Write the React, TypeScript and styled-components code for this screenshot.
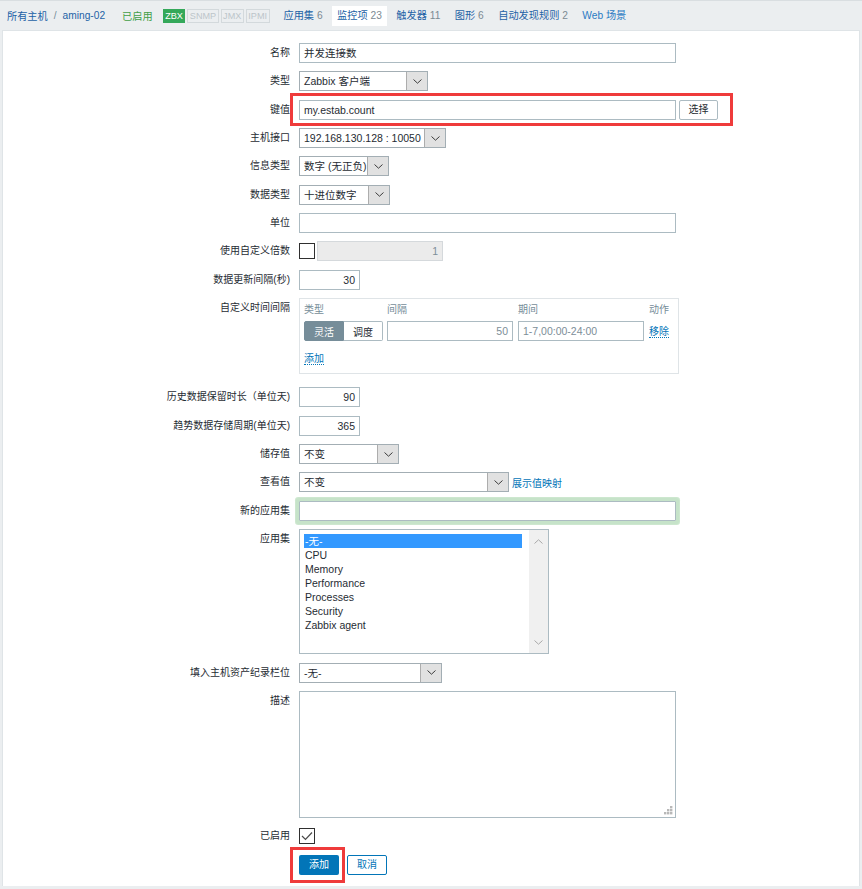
import React from "react";
import styled, { createGlobalStyle } from "styled-components";

const GlobalStyle = createGlobalStyle`
  html, body {
    margin: 0;
    padding: 0;
    background: #ebeef0;
  }
  body {
    font-family: "Liberation Sans", "Noto Sans CJK SC", sans-serif;
    font-size: 10.5px;
    color: #1f2c33;
  }
  * {
    box-sizing: border-box;
  }
`;

const Page = styled.div`
  width: 862px;
  min-height: 889px;
  background: #ebeef0;
  border-top: 1px solid #d9dee1;
`;

/* ---------- host navigation ---------- */

const HostNav = styled.div`
  display: flex;
  align-items: center;
  height: 29px;
  padding-left: 7px;
  font-size: 10.2px;
  white-space: nowrap;
`;

const Breadcrumbs = styled.div`
  display: flex;
  align-items: center;
  gap: 6px;
  color: #1d62a6;
`;

const Slash = styled.span`
  color: #768d99;
`;

const Status = styled.span`
  margin-left: 17px;
  color: #429e47;
`;

const Badges = styled.div`
  display: flex;
  gap: 2px;
  margin-left: 10px;
`;

const Badge = styled.span<{ $on?: boolean }>`
  height: 14px;
  line-height: 12px;
  padding: 0 1.5px;
  font-size: 9.1px;
  border: 1px solid ${(p) => (p.$on ? "#34a85a" : "#d3d9dc")};
  background: ${(p) => (p.$on ? "#34a85a" : "#ebeef0")};
  color: ${(p) => (p.$on ? "#fff" : "#bcc5ca")};
`;

const Tabs = styled.div`
  display: flex;
  gap: 4.5px;
  margin-left: 9px;
`;

const Tab = styled.span<{ $active?: boolean; $light?: boolean }>`
  height: 20px;
  line-height: 20px;
  padding: 0 5px;
  background: ${(p) => (p.$active ? "#fff" : "transparent")};
  color: ${(p) => (p.$light ? "#2a7ac3" : "#1d62a6")};
`;

const Count = styled.span`
  color: #7b8a93;
`;

/* ---------- form ---------- */

const Panel = styled.div`
  margin: 0 2px;
  background: #fff;
  border: 1px solid #dfe4e7;
  border-bottom: none;
  padding: 12px 0 11px;
`;

const FormList = styled.div`
  display: flex;
  flex-direction: column;
  gap: 8.35px;
`;

const Row = styled.div`
  display: grid;
  grid-template-columns: 287px auto;
  column-gap: 9px;
  align-items: start;
`;

const Label = styled.div`
  text-align: right;
  line-height: 20px;
  font-size: 10px;
  white-space: nowrap;
`;

const Field = styled.div<{ $gap?: number }>`
  position: relative;
  justify-self: start;
  display: flex;
  align-items: center;
  gap: ${(p) => p.$gap ?? 3}px;
  min-height: 20px;
`;

const Marked = styled.span<{ $t: number; $r: number; $b: number; $l: number }>`
  position: relative;
  display: inline-flex;
  align-items: center;
  gap: 3px;
  &::after {
    content: "";
    position: absolute;
    top: ${(p) => -p.$t}px;
    right: ${(p) => -p.$r}px;
    bottom: ${(p) => -p.$b}px;
    left: ${(p) => -p.$l}px;
    border: 3.5px solid #ef3b3b;
    pointer-events: none;
  }
`;

const TextBox = styled.div<{ $w: number; $right?: boolean; $muted?: boolean; $disabled?: boolean; $glow?: boolean }>`
  width: ${(p) => p.$w}px;
  height: 20px;
  line-height: 18px;
  padding: 0 4px;
  border: 1px solid ${(p) => (p.$disabled ? "#d5d9dc" : "#acbbc2")};
  background: ${(p) => (p.$disabled ? "#ebebeb" : "#fff")};
  color: ${(p) => (p.$muted || p.$disabled ? "#7d8e98" : "#1f2c33")};
  text-align: ${(p) => (p.$right ? "right" : "left")};
  white-space: nowrap;
  overflow: hidden;
  box-shadow: ${(p) => (p.$glow ? "0 0 0 3px #c6e3c9, 0 0 0 4px #cde7cf" : "none")};
  border-radius: ${(p) => (p.$glow ? "1px" : "0")};
`;

const SelectBox = styled.div<{ $w: number }>`
  display: flex;
  width: ${(p) => p.$w}px;
  height: 20px;
  border: 1px solid #a3aeb4;
  background: #fff;
`;

const SelectText = styled.span`
  flex: 1;
  padding: 0 4px;
  line-height: 19px;
  white-space: nowrap;
  overflow: hidden;
`;

const SelectArrow = styled.span`
  width: 21px;
  display: flex;
  align-items: center;
  justify-content: center;
  background: #e1e1e1;
  border-left: 1px solid #adadad;
`;

const Chevron = ({ up, color = "#3c3c3c" }: { up?: boolean; color?: string }) => (
  <svg width="9" height="5" viewBox="0 0 9 5">
    <path
      d={up ? "M0.5 4.5 L4.5 0.8 L8.5 4.5" : "M0.5 0.5 L4.5 4.2 L8.5 0.5"}
      fill="none"
      stroke={color}
      strokeWidth="1"
    />
  </svg>
);

const Select = ({ w, value }: { w: number; value: string }) => (
  <SelectBox $w={w}>
    <SelectText>{value}</SelectText>
    <SelectArrow>
      <Chevron />
    </SelectArrow>
  </SelectBox>
);

const PlainButton = styled.span`
  width: 39px;
  height: 20px;
  line-height: 18px;
  text-align: center;
  border: 1px solid #acbbc2;
  border-radius: 2px;
  background: #fff;
  font-size: 10px;
`;

const Checkbox = styled.span`
  width: 16px;
  height: 16px;
  border: 1.5px solid #2f2f2f;
  background: #fff;
  display: flex;
  align-items: center;
  justify-content: center;
`;

const Link = styled.span`
  color: #0275b8;
  line-height: 13px;
  font-size: 10px;
  border-bottom: 1px dotted #0275b8;
`;

const PlainLink = styled.span`
  color: #0275b8;
  font-size: 10px;
`;

/* ---------- custom intervals ---------- */

const IntervalBox = styled.div`
  width: 380px;
  height: 76px;
  margin-bottom: 5px;
  padding: 4px 0 0 4px;
  border: 1px solid #dfe4e7;
`;

const IntervalGrid = styled.div`
  display: grid;
  grid-template-columns: 83px 131px 131px auto;
  row-gap: 4px;
  align-items: center;
`;

const ColHead = styled.span`
  color: #768d99;
  line-height: 14px;
  font-size: 10px;
`;

const Toggle = styled.div`
  display: flex;
  width: 79px;
  height: 20px;
  font-size: 10px;
`;

const ToggleOption = styled.span<{ $active?: boolean }>`
  flex: 1;
  display: flex;
  align-items: center;
  justify-content: center;
  border: 1px solid ${(p) => (p.$active ? "#768d99" : "#acbbc2")};
  background: ${(p) => (p.$active ? "#768d99" : "#fff")};
  color: ${(p) => (p.$active ? "#fff" : "#1f2c33")};
  &:first-child {
    border-radius: 2px 0 0 2px;
  }
  &:last-child {
    border-radius: 0 2px 2px 0;
    border-left: none;
  }
`;

const AddRow = styled.div`
  margin-top: 10px;
  line-height: 14px;
`;

/* ---------- list box ---------- */

const ListBox = styled.div`
  display: flex;
  width: 250px;
  height: 125px;
  border: 1px solid #acbbc2;
`;

const ListItems = styled.div`
  flex: 1;
  padding: 4px 7px 0 4px;
`;

const ListItem = styled.div<{ $selected?: boolean }>`
  height: 14px;
  line-height: 14px;
  padding: 0 1px;
  background: ${(p) => (p.$selected ? "#3399ff" : "transparent")};
  color: ${(p) => (p.$selected ? "#fff" : "#1f2c33")};
`;

const ScrollTrack = styled.div`
  width: 19px;
  background: #f0f0f0;
  display: flex;
  flex-direction: column;
  justify-content: space-between;
  align-items: center;
  padding: 9px 0 8px;
`;

const TextArea = styled.div`
  width: 377px;
  height: 127px;
  border: 1px solid #acbbc2;
  display: flex;
  align-items: flex-end;
  justify-content: flex-end;
  padding: 0 2px 2px 0;
`;

const Grip = () => (
  <svg width="9" height="9" viewBox="0 0 9 9">
    {[
      [6, 0],
      [3, 3],
      [6, 3],
      [0, 6],
      [3, 6],
      [6, 6],
    ].map(([x, y]) => (
      <rect key={`${x}-${y}`} x={x} y={y} width="2.4" height="2.4" fill="#b8b8b8" />
    ))}
  </svg>
);

const PrimaryButton = styled.span`
  width: 40px;
  height: 20px;
  line-height: 20px;
  text-align: center;
  border-radius: 2px;
  background: #0275b8;
  color: #fff;
  font-size: 10px;
`;

const OutlineButton = styled.span`
  width: 40px;
  height: 20px;
  line-height: 18px;
  text-align: center;
  border: 1px solid #0275b8;
  border-radius: 2px;
  background: #fff;
  color: #0275b8;
  font-size: 10px;
`;

const ButtonRow = styled.div`
  display: flex;
  gap: 8px;
  margin-left: 296px;
`;

const applications = ["CPU", "Memory", "Performance", "Processes", "Security", "Zabbix agent"];

const App = () => {
  return (
    <Page>
      <GlobalStyle />
      <HostNav>
        <Breadcrumbs>
          <span>所有主机</span>
          <Slash>/</Slash>
          <span>aming-02</span>
        </Breadcrumbs>
        <Status>已启用</Status>
        <Badges>
          <Badge $on>ZBX</Badge>
          <Badge>SNMP</Badge>
          <Badge>JMX</Badge>
          <Badge>IPMI</Badge>
        </Badges>
        <Tabs>
          <Tab>
            应用集 <Count>6</Count>
          </Tab>
          <Tab $active>
            监控项 <Count>23</Count>
          </Tab>
          <Tab>
            触发器 <Count>11</Count>
          </Tab>
          <Tab>
            图形 <Count>6</Count>
          </Tab>
          <Tab>
            自动发现规则 <Count>2</Count>
          </Tab>
          <Tab $light>Web 场景</Tab>
        </Tabs>
      </HostNav>

      <Panel>
        <FormList>
          <Row>
            <Label>名称</Label>
            <Field>
              <TextBox $w={377}>并发连接数</TextBox>
            </Field>
          </Row>
          <Row>
            <Label>类型</Label>
            <Field>
              <Select w={129} value="Zabbix 客户端" />
            </Field>
          </Row>
          <Row>
            <Label>键值</Label>
            <Field>
              <Marked $t={7} $r={15} $b={6} $l={9}>
                <TextBox $w={377}>my.estab.count</TextBox>
                <PlainButton>选择</PlainButton>
              </Marked>
            </Field>
          </Row>
          <Row>
            <Label>主机接口</Label>
            <Field>
              <Select w={147} value="192.168.130.128 : 10050" />
            </Field>
          </Row>
          <Row>
            <Label>信息类型</Label>
            <Field>
              <Select w={90} value="数字 (无正负)" />
            </Field>
          </Row>
          <Row>
            <Label>数据类型</Label>
            <Field>
              <Select w={91} value="十进位数字" />
            </Field>
          </Row>
          <Row>
            <Label>单位</Label>
            <Field>
              <TextBox $w={377} />
            </Field>
          </Row>
          <Row>
            <Label>使用自定义倍数</Label>
            <Field $gap={2}>
              <Checkbox />
              <TextBox $w={126} $right $disabled>
                1
              </TextBox>
            </Field>
          </Row>
          <Row>
            <Label>数据更新间隔(秒)</Label>
            <Field>
              <TextBox $w={61} $right>
                30
              </TextBox>
            </Field>
          </Row>
          <Row>
            <Label>自定义时间间隔</Label>
            <Field>
              <IntervalBox>
                <IntervalGrid>
                  <ColHead>类型</ColHead>
                  <ColHead>间隔</ColHead>
                  <ColHead>期间</ColHead>
                  <ColHead>动作</ColHead>
                  <Toggle>
                    <ToggleOption $active>灵活</ToggleOption>
                    <ToggleOption>调度</ToggleOption>
                  </Toggle>
                  <TextBox $w={126} $right $muted>
                    50
                  </TextBox>
                  <TextBox $w={126} $muted>
                    1-7,00:00-24:00
                  </TextBox>
                  <span>
                    <Link>移除</Link>
                  </span>
                </IntervalGrid>
                <AddRow>
                  <Link>添加</Link>
                </AddRow>
              </IntervalBox>
            </Field>
          </Row>
          <Row>
            <Label>历史数据保留时长（单位天)</Label>
            <Field>
              <TextBox $w={61} $right>
                90
              </TextBox>
            </Field>
          </Row>
          <Row>
            <Label>趋势数据存储周期(单位天)</Label>
            <Field>
              <TextBox $w={61} $right>
                365
              </TextBox>
            </Field>
          </Row>
          <Row>
            <Label>储存值</Label>
            <Field>
              <Select w={100} value="不变" />
            </Field>
          </Row>
          <Row>
            <Label>查看值</Label>
            <Field>
              <Select w={210} value="不变" />
              <PlainLink>展示值映射</PlainLink>
            </Field>
          </Row>
          <Row>
            <Label>新的应用集</Label>
            <Field>
              <TextBox $w={377} $glow />
            </Field>
          </Row>
          <Row>
            <Label>应用集</Label>
            <Field>
              <ListBox>
                <ListItems>
                  <ListItem $selected>-无-</ListItem>
                  {applications.map((a) => (
                    <ListItem key={a}>{a}</ListItem>
                  ))}
                </ListItems>
                <ScrollTrack>
                  <Chevron up color="#a8a8a8" />
                  <Chevron color="#a8a8a8" />
                </ScrollTrack>
              </ListBox>
            </Field>
          </Row>
          <Row>
            <Label>填入主机资产纪录栏位</Label>
            <Field>
              <Select w={143} value="-无-" />
            </Field>
          </Row>
          <Row>
            <Label>描述</Label>
            <Field>
              <TextArea>
                <Grip />
              </TextArea>
            </Field>
          </Row>
          <Row>
            <Label>已启用</Label>
            <Field>
              <Checkbox>
                <svg width="12" height="10" viewBox="0 0 12 10">
                  <path d="M1 5 L4.5 8.5 L11 1.5" fill="none" stroke="#4a4a4a" strokeWidth="1.2" />
                </svg>
              </Checkbox>
            </Field>
          </Row>
          <ButtonRow>
            <Marked $t={8} $r={6} $b={8} $l={9}>
              <PrimaryButton>添加</PrimaryButton>
            </Marked>
            <OutlineButton>取消</OutlineButton>
          </ButtonRow>
        </FormList>
      </Panel>
    </Page>
  );
};

export default App;
